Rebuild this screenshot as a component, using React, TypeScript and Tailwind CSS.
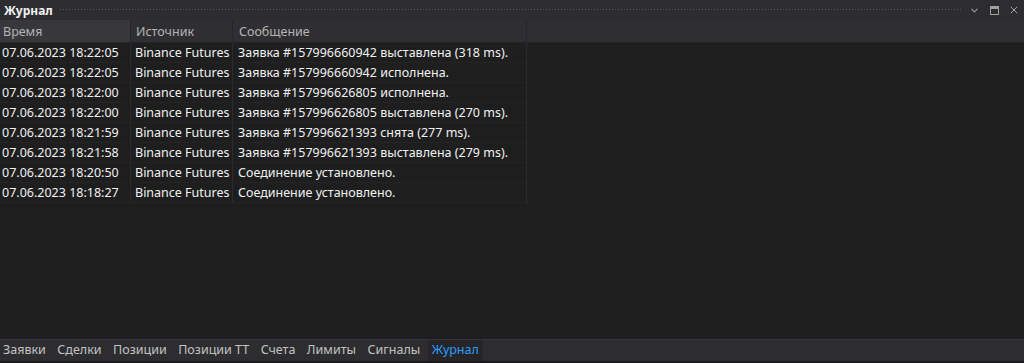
import { ChevronDown, X } from "lucide-react"

const rows = [
  ["07.06.2023 18:22:05", "Binance Futures", "Заявка #157996660942 выставлена (318 ms)."],
  ["07.06.2023 18:22:05", "Binance Futures", "Заявка #157996660942 исполнена."],
  ["07.06.2023 18:22:00", "Binance Futures", "Заявка #157996626805 исполнена."],
  ["07.06.2023 18:22:00", "Binance Futures", "Заявка #157996626805 выставлена (270 ms)."],
  ["07.06.2023 18:21:59", "Binance Futures", "Заявка #157996621393 снята (277 ms)."],
  ["07.06.2023 18:21:58", "Binance Futures", "Заявка #157996621393 выставлена (279 ms)."],
  ["07.06.2023 18:20:50", "Binance Futures", "Соединение установлено."],
  ["07.06.2023 18:18:27", "Binance Futures", "Соединение установлено."],
]

const tabs = ["Заявки", "Сделки", "Позиции", "Позиции ТТ", "Счета", "Лимиты", "Сигналы", "Журнал"]

export default function App() {
  return (
    <div
      className="w-[1024px] h-[363px] flex flex-col bg-[#1e1e1e] overflow-hidden text-[12.5px]"
      style={{ fontFamily: '"Noto Sans", "Open Sans", sans-serif' }}
    >
      {/* Title bar */}
      <div className="h-[20px] flex items-center bg-[#2d2d30] pl-[4px] pr-[4px] gap-[6px]">
        <span className="font-bold text-[#f0f0f0] text-[12px] leading-none pt-[1px]">Журнал</span>
        <div className="flex-1 h-[4px] bg-[radial-gradient(#5a5a5e_0.6px,transparent_0.8px)] bg-[length:3px_3px]" />
        <ChevronDown className="w-[11px] h-[11px] text-[#9a9a9a]" strokeWidth={2.5} />
        <div className="w-[9px] h-[9px] border border-[#a0a0a0] border-t-[3px] ml-[4px]" />
        <X className="w-[12px] h-[12px] text-[#a0a0a0] ml-[3px]" strokeWidth={2} />
      </div>

      {/* Header */}
      <div className="h-[23px] flex bg-[#2f2f33] text-[#b4b4b4] border-b border-[#252528] leading-none">
        <div className="w-[131px] bg-[#38383c] pl-[3px] pt-[2px] flex items-center border-r border-[#26262a]">Время</div>
        <div className="w-[102px] pl-[5px] pt-[2px] flex items-center border-r border-[#26262a]">Источник</div>
        <div className="w-[294px] pl-[6px] pt-[2px] flex items-center border-r border-[#26262a]">Сообщение</div>
        <div className="flex-1" />
      </div>

      {/* Rows */}
      <div className="flex-1 flex flex-col">
        <div className="w-[528px] flex flex-col">
          {rows.map((r, i) => (
            <div key={i} className="h-[20px] flex text-[#f0f0f0] border-b border-[#242427] leading-none">
              <div className="w-[131px] pl-[2px] pt-[2px] flex items-center border-r border-[#2c2c30] whitespace-nowrap">{r[0]}</div>
              <div className="w-[102px] pl-[4px] pt-[2px] flex items-center border-r border-[#2c2c30] whitespace-nowrap">{r[1]}</div>
              <div className="w-[294px] pl-[5px] pt-[2px] flex items-center border-r border-[#2c2c30] whitespace-nowrap">{r[2]}</div>
            </div>
          ))}
          <div className="h-[2px] border-r border-[#2c2c30]" />
        </div>
      </div>

      {/* Tabs */}
      <div className="h-[22px] flex bg-[#2d2d30] border-t border-[#353539] gap-[3.5px]">
        {tabs.map((t, i) => (
          <div
            key={t}
            className={
              t === "Журнал"
                ? "px-[4px] flex items-center bg-[#252528] text-[#2f9bff] whitespace-nowrap"
                : i === 0
                  ? "pl-[3px] pr-[4px] flex items-center text-[#c2c2c2] whitespace-nowrap"
                  : "px-[4px] flex items-center text-[#c2c2c2] whitespace-nowrap"
            }
          >
            {t}
          </div>
        ))}
      </div>
      <div className="h-[2px] bg-[#1a1a1c]" />
    </div>
  )
}
